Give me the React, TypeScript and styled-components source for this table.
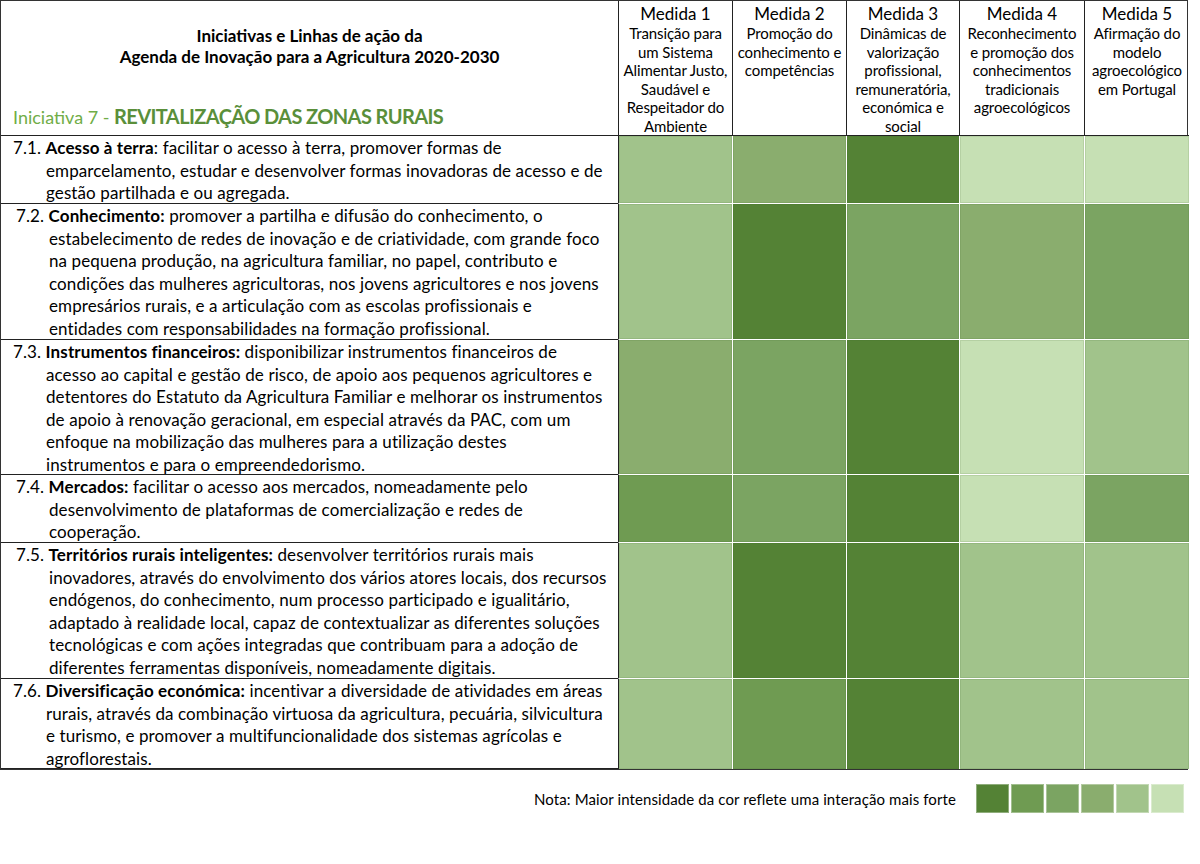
import React from "react";
import styled, { createGlobalStyle } from "styled-components";

const GlobalStyle = createGlobalStyle`
  html, body {
    margin: 0;
    padding: 0;
    background: #fff;
  }
  body {
    font-family: Lato, "Open Sans", "Liberation Sans", sans-serif;
    color: #000;
  }
`;

const palette = ["#c6e0b4", "#a1c38b", "#8aad6e", "#7ba462", "#6f9b52", "#548235"];

const colWidths = [617, 114, 114, 113, 125, 105];

const Page = styled.div`
  width: 1200px;
  height: 864px;
  display: flex;
  flex-direction: column;
`;

const Table = styled.div`
  width: 1188px;
  display: grid;
  grid-template-columns: ${colWidths.map((w) => `${w}px`).join(" ")};
  border: 1.5px solid #333;
  box-sizing: border-box;
`;

const TitleCell = styled.div`
  height: 135px;
  box-sizing: border-box;
  border-bottom: 1.5px solid #222;
  display: flex;
  flex-direction: column;
  padding: 24px 0 7px 12px;
`;

const Title = styled.div`
  text-align: center;
  font-weight: 700;
  font-size: 17px;
  line-height: 21px;
  padding-right: 12px;
`;

const Initiative = styled.div`
  margin-top: auto;
  white-space: nowrap;
  color: #70ad47;
  font-size: 18px;
`;

const InitiativeName = styled.span`
  color: #5a8f3a;
  font-size: 20px;
  font-weight: 700;
  letter-spacing: -0.6px;
`;

const MeasureHead = styled.div`
  height: 135px;
  box-sizing: border-box;
  border-left: 1.5px solid #222;
  border-bottom: 1.5px solid #222;
  text-align: center;
  padding-top: 2px;
`;

const MeasureNum = styled.div`
  font-size: 17px;
  line-height: 21px;
`;

const MeasureDesc = styled.div`
  font-size: 15px;
  line-height: 18.5px;
  letter-spacing: -0.1px;
`;

const TextCell = styled.div<{ $h: number; $inset: number }>`
  height: ${(p) => p.$h}px;
  box-sizing: border-box;
  border-bottom: 1.5px solid #222;
  padding: 1px 0 0 ${(p) => p.$inset}px;
  font-size: 17px;
  line-height: 22.5px;
  letter-spacing: 0.1px;
`;

const Line = styled.div<{ $indent: boolean }>`
  white-space: nowrap;
  padding-left: ${(p) => (p.$indent ? 33 : 0)}px;
`;

const ColorCell = styled.div<{ $level: number; $first: boolean; $last: boolean }>`
  background: ${(p) => palette[p.$level - 1]};
  border-left: ${(p) => (p.$first ? "1.5px solid #222" : "1px solid #fff")};
  border-bottom: ${(p) => (p.$last ? "none" : "1px solid #fff")};
  box-shadow: inset 0 0 0 1px rgba(60, 100, 40, 0.12);
`;

const Note = styled.div`
  display: flex;
  align-items: center;
  justify-content: flex-end;
  gap: 20px;
  padding: 14px 16px 0 0;
`;

const NoteText = styled.span`
  font-size: 15px;
  letter-spacing: 0.1px;
`;

const Swatches = styled.div`
  display: flex;
  gap: 2px;
`;

const Swatch = styled.div<{ $color: string }>`
  width: 33px;
  height: 29px;
  background: ${(p) => p.$color};
  box-shadow: inset 0 0 0 1px rgba(255, 255, 255, 0.35);
`;

const measures = [
  { n: 1, lines: ["Transição para", "um Sistema", "Alimentar Justo,", "Saudável e", "Respeitador do", "Ambiente"] },
  { n: 2, lines: ["Promoção do", "conhecimento e", "competências"] },
  { n: 3, lines: ["Dinâmicas de", "valorização", "profissional,", "remuneratória,", "económica e", "social"] },
  { n: 4, lines: ["Reconhecimento", "e promoção dos", "conhecimentos", "tradicionais", "agroecológicos"] },
  { n: 5, lines: ["Afirmação do", "modelo", "agroecológico", "em Portugal"] },
];

const rows = [
  {
    code: "7.1.",
    title: "Acesso à terra",
    colonBold: false,
    inset: 12,
    h: 68,
    levels: [2, 3, 6, 1, 1],
    lines: [
      " facilitar o acesso à terra, promover formas de",
      "emparcelamento, estudar e desenvolver formas inovadoras de acesso e de",
      "gestão partilhada e ou agregada.",
    ],
  },
  {
    code: "7.2.",
    title: "Conhecimento:",
    colonBold: true,
    inset: 15,
    h: 136,
    levels: [2, 6, 4, 3, 4],
    lines: [
      " promover a partilha e difusão do conhecimento, o",
      "estabelecimento de redes de inovação e de criatividade, com grande foco",
      "na pequena produção, na agricultura familiar, no papel, contributo e",
      "condições das mulheres agricultoras, nos jovens agricultores e nos jovens",
      "empresários rurais, e a articulação com as escolas profissionais e",
      "entidades com responsabilidades na formação profissional.",
    ],
  },
  {
    code: "7.3.",
    title: "Instrumentos financeiros:",
    colonBold: true,
    inset: 12,
    h: 135,
    levels: [3, 4, 6, 1, 2],
    lines: [
      " disponibilizar instrumentos financeiros de",
      "acesso ao capital e gestão de risco, de apoio aos pequenos agricultores e",
      "detentores do Estatuto da Agricultura Familiar e melhorar os instrumentos",
      "de apoio à renovação geracional, em especial através da PAC, com um",
      "enfoque na mobilização das mulheres para a utilização destes",
      "instrumentos e para o empreendedorismo.",
    ],
  },
  {
    code: "7.4.",
    title: "Mercados:",
    colonBold: true,
    inset: 15,
    h: 68,
    levels: [5, 4, 6, 1, 4],
    lines: [
      " facilitar o acesso aos mercados, nomeadamente pelo",
      "desenvolvimento de plataformas de comercialização e redes de",
      "cooperação.",
    ],
  },
  {
    code: "7.5.",
    title: "Territórios rurais inteligentes:",
    colonBold: true,
    inset: 15,
    h: 136,
    levels: [2, 6, 6, 2, 2],
    lines: [
      " desenvolver territórios rurais mais",
      "inovadores, através do envolvimento dos vários atores locais, dos recursos",
      "endógenos, do conhecimento, num processo participado e igualitário,",
      "adaptado à realidade local, capaz de contextualizar as diferentes soluções",
      "tecnológicas e com ações integradas que contribuam para a adoção de",
      "diferentes ferramentas disponíveis, nomeadamente digitais.",
    ],
  },
  {
    code: "7.6.",
    title: "Diversificação económica:",
    colonBold: true,
    inset: 12,
    h: 90,
    levels: [2, 5, 6, 2, 2],
    lines: [
      " incentivar a diversidade de atividades em áreas",
      "rurais, através da combinação virtuosa da agricultura, pecuária, silvicultura",
      "e turismo, e promover a multifuncionalidade dos sistemas agrícolas e",
      "agroflorestais.",
    ],
  },
];

export default function App() {
  return (
    <Page>
      <GlobalStyle />
      <Table>
        <TitleCell>
          <Title>
            Iniciativas e Linhas de ação da
            <br />
            Agenda de Inovação para a Agricultura 2020-2030
          </Title>
          <Initiative>
            Iniciativa 7 - <InitiativeName>REVITALIZAÇÃO DAS ZONAS RURAIS</InitiativeName>
          </Initiative>
        </TitleCell>
        {measures.map((m) => (
          <MeasureHead key={m.n}>
            <MeasureNum>Medida {m.n}</MeasureNum>
            <MeasureDesc>
              {m.lines.map((l) => (
                <div key={l}>{l}</div>
              ))}
            </MeasureDesc>
          </MeasureHead>
        ))}
        {rows.map((r, ri) => (
          <React.Fragment key={r.code}>
            <TextCell $h={r.h} $inset={r.inset}>
              {r.lines.map((l, i) => (
                <Line key={i} $indent={i > 0}>
                  {i === 0 ? (
                    <>
                      {r.code} <b>{r.title}</b>
                      {!r.colonBold && ":"}
                      {l}
                    </>
                  ) : (
                    l
                  )}
                </Line>
              ))}
            </TextCell>
            {r.levels.map((lv, ci) => (
              <ColorCell key={ci} $level={lv} $first={ci === 0} $last={ri === rows.length - 1} />
            ))}
          </React.Fragment>
        ))}
      </Table>
      <Note>
        <NoteText>Nota: Maior intensidade da cor reflete uma interação mais forte</NoteText>
        <Swatches>
          {[...palette].reverse().map((c) => (
            <Swatch key={c} $color={c} />
          ))}
        </Swatches>
      </Note>
    </Page>
  );
}
